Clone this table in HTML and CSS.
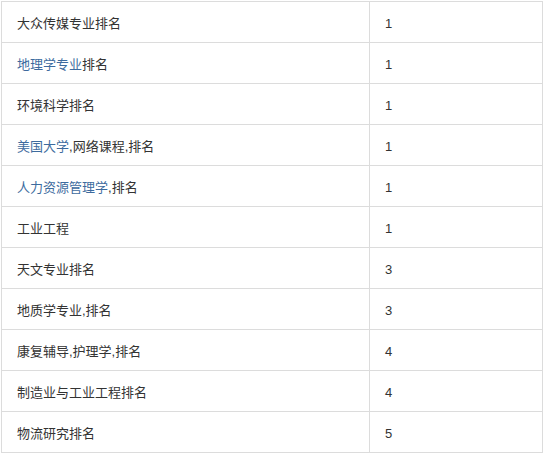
FILE: index.html
```html
<!DOCTYPE html>
<html lang="zh">
<head>
<meta charset="utf-8">
<link rel="stylesheet" href="styles.css">
</head>
<body>
<table class="rank">
<tr><td class="name">大众传媒专业排名</td><td class="num">1</td></tr>
<tr><td class="name"><a class="lnk">地理学专业</a>排名</td><td class="num">1</td></tr>
<tr><td class="name">环境科学排名</td><td class="num">1</td></tr>
<tr><td class="name"><a class="lnk">美国大学</a>,网络课程,排名</td><td class="num">1</td></tr>
<tr><td class="name"><a class="lnk">人力资源管理学</a>,排名</td><td class="num">1</td></tr>
<tr><td class="name">工业工程</td><td class="num">1</td></tr>
<tr><td class="name">天文专业排名</td><td class="num">3</td></tr>
<tr><td class="name">地质学专业,排名</td><td class="num">3</td></tr>
<tr><td class="name">康复辅导,护理学,排名</td><td class="num">4</td></tr>
<tr><td class="name">制造业与工业工程排名</td><td class="num">4</td></tr>
<tr><td class="name">物流研究排名</td><td class="num">5</td></tr>
</table>
</body>
</html>
```
FILE: styles.css
```css
html, body {
  margin: 0;
  padding: 0;
  background: #fff;
}
body {
  padding: 1px 0 0 1px;
  font-family: "Liberation Sans", "Noto Sans CJK SC", sans-serif;
  font-size: 13px;
  color: #333;
}
.rank {
  border-collapse: collapse;
  width: 542px;
  table-layout: fixed;
}
.rank td {
  border: 1px solid #dcdcdc;
  height: 41px;
  padding: 3px 0 0 15px;
  box-sizing: border-box;
  vertical-align: middle;
  line-height: 20px;
}
.rank td.name {
  width: 368px;
}
.lnk {
  color: #3d6b9e;
  text-decoration: none;
}
```
